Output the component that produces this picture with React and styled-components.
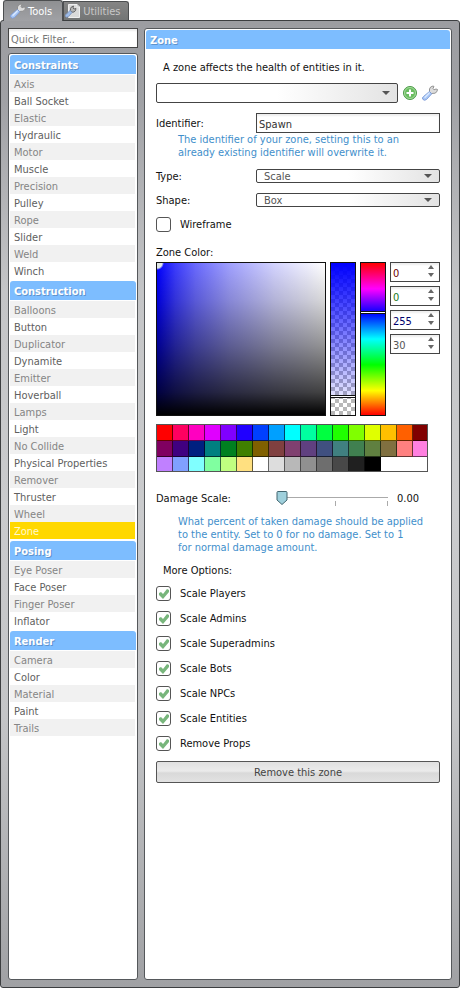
import React, { useState } from "react";
import styled, { createGlobalStyle, css } from "styled-components";

const svgUrl = (body, w, h) =>
  `url("data:image/svg+xml,${encodeURIComponent(
    `<svg xmlns='http://www.w3.org/2000/svg' width='${w}' height='${h}' viewBox='0 0 ${w} ${h}'>${body}</svg>`
  )}")`;

const arrowImage = svgUrl("<path d='M0 1H8L4 5Z' fill='#555'/>", 8, 6);
const tickImage = svgUrl(
  "<path d='M1 5L3 4L5 6L9 1L11 2V4L5 11L1 7Z' fill='#78b67c'/>",
  12,
  12
);
const thumbImage = svgUrl(
  "<path d='M1 1.5Q1 .5 2 .5H10Q11 .5 11 1.5V9L6 13.5L1 9Z' fill='#9fd0dc' stroke='#42656f'/>",
  12,
  14
);

const Global = createGlobalStyle`
  *, *::before, *::after { box-sizing: border-box; }
  body {
    margin: 0;
    background: #fff;
    color: #111;
    font: 11px/13px "DejaVu Sans Condensed", "DejaVu Sans", sans-serif;
  }
  button, input, select { font: inherit; color: inherit; margin: 0; }
`;

const Shell = styled.div`
  display: flex;
  flex-direction: column;
  min-height: 100vh;
`;

const TabBar = styled.div`
  display: flex;
  align-items: flex-end;
  height: 20px;
  padding-left: 3px;
`;

const Tab = styled.button`
  display: flex;
  align-items: center;
  gap: 2px;
  height: 19px;
  padding: 0 8px 0 1px;
  border: 1px solid #4c4e50;
  border-bottom: 0;
  border-radius: 0 3px 0 0;
  background: linear-gradient(#858585, #737575);
  color: #c8c8c8;
  white-space: nowrap;
  ${(p) =>
    p.$active &&
    css`
      z-index: 1;
      height: 21px;
      margin-bottom: -1px;
      padding: 0 10px 0 6px;
      border-radius: 3px 3px 0 0;
      background: linear-gradient(#8f9092, #a0a1a5);
      color: #fff;
    `}
`;

const Frame = styled.div`
  flex: 1;
  display: flex;
  gap: 6px;
  padding: 7px;
  border: 1px solid #3c3e40;
  border-radius: 3px;
  background: linear-gradient(#9c9da1, #a0a1a5 8%, #c4c5c7 28%, #cacbcd 50%, #c4c5c7 72%, #a0a1a4);
`;

const Sidebar = styled.aside`
  display: flex;
  flex-direction: column;
  gap: 5px;
  flex: 0 0 130px;
`;

const TextBox = styled.input`
  width: 100%;
  min-width: 0;
  height: 20px;
  padding: 2px 2px 0;
  border: 1px solid #444;
  border-radius: 0;
  background: #fff;
  box-shadow: inset 0 2px 2px #eee;
  color: #333;
  &::placeholder { color: #777; opacity: 1; }
`;

const panel = css`
  border: 1px solid #55585b;
  border-radius: 3px;
  background: #fff;
  padding: 1px;
`;

const ToolList = styled.nav`
  ${panel}
  flex: 1;
`;

const ToolGroup = styled.section`
  display: flex;
  flex-direction: column;
  padding-bottom: 2px;
`;

const Heading = styled.h2`
  height: 19px;
  margin: 0 0 1px;
  padding: 2px 4px 0;
  border-radius: 3px 3px 0 0;
  background: #7dbdff;
  color: #fff;
  font-size: 11px;
  font-weight: bold;
  line-height: 17px;
  text-shadow: 1px 1px 0 #5f93cc;
`;

const Tool = styled.button`
  height: 17px;
  margin: 0 1px 0 0;
  padding: 2px 4px 0;
  border: 0;
  background: ${(p) => (p.$active ? "#ffd800" : "#fff")};
  color: ${(p) => (p.$active ? "#fff8cc" : "#606060")};
  line-height: 15px;
  text-align: left;
  ${(p) =>
    !p.$active &&
    css`
      &:nth-of-type(odd) { background: #f1f1f1; color: #858585; }
    `}
`;

const Main = styled.main`
  ${panel}
  flex: 1;
  min-width: 0;
`;

const Body = styled.form`
  display: flex;
  flex-direction: column;
  padding: 11px 10px 0;
`;

const Note = styled.p`
  margin: 0;
  padding-left: 7px;
`;

const PresetRow = styled.div`
  display: flex;
  align-items: center;
  gap: 4px;
  margin: 9px 0 10px;
  padding-right: 2px;
`;

const IconButton = styled.button`
  display: flex;
  padding: 0;
  border: 0;
  background: none;
`;

const Select = styled.select`
  appearance: none;
  flex: 1;
  width: 100%;
  min-width: 0;
  height: ${(p) => (p.$tall ? 20 : 14)}px;
  padding: 1px 18px 0 7px;
  border: 1px solid #444;
  border-radius: 2px;
  background: ${arrowImage} no-repeat right 7px center,
    linear-gradient(90deg, #fff 50%, #e3e3e3);
  color: #555;
  line-height: 11px;
`;

const Field = styled.div`
  display: grid;
  grid-template-columns: 100px 1fr;
  align-items: center;
  margin-bottom: ${(p) => p.$gap || 0}px;
`;

const Help = styled.p`
  margin: 0 0 10px;
  padding-left: 22px;
  color: #3f8fcb;
`;

const CheckRow = styled.label`
  display: flex;
  align-items: center;
  gap: 9px;
  height: 15px;
`;

const CheckBox = styled.input`
  appearance: none;
  width: 15px;
  height: 15px;
  border: 1px solid #555;
  border-radius: 3px;
  background: #fff;
  &:checked { background: ${tickImage} center no-repeat; }
`;

const Options = styled.div`
  display: flex;
  flex-direction: column;
  gap: 10px;
  margin: 9px 0 10px;
`;

const PickerTitle = styled.div`
  margin-top: 14px;
`;

const Picker = styled.div`
  display: flex;
  gap: 4px;
  height: 154px;
  margin: 3px 0 8px;
`;

const Shade = styled.div`
  flex: 1;
  border: 1px solid #111;
  background: radial-gradient(circle at 0 0, #dfe6e6 5px, transparent 7px),
    linear-gradient(
      to top,
      #000,
      rgba(0, 0, 0, 0.74) 15%,
      rgba(0, 0, 0, 0.43) 45%,
      rgba(0, 0, 0, 0.16) 75%,
      rgba(0, 0, 0, 0)
    ),
    linear-gradient(90deg, #00f, #3c3cff 11%, #6a6aff 23%, #a0a0ff 43%, #d4d4ff 70%, #fff);
`;

const Bar = styled.div`
  display: flex;
  flex-direction: column;
  width: 26px;
  border: 1px solid #111;
  ${(p) =>
    p.$hue
      ? css`
          background: linear-gradient(#f00, #f0f 17%, #00f 33%, #0ff 50%, #0f0 67%, #ff0 84%, #f00);
        `
      : css`
          background: linear-gradient(#00f, rgba(0, 0, 255, 0.1) 88%, transparent 88%),
            repeating-conic-gradient(#b8b8b8 0 25%, #fff 0 50%) 0 0 / 8px 8px;
        `}
`;

const BarMark = styled.div`
  height: 3px;
  border: solid #111;
  border-width: 1px 0;
  background: #fff;
`;

const BarSpace = styled.div`
  flex: ${(p) => p.$part};
`;

const Channels = styled.div`
  display: flex;
  flex-direction: column;
  gap: 4px;
  width: 50px;
`;

const NumberBox = styled.div`
  display: flex;
  height: 20px;
  border: 1px solid #444;
  box-shadow: inset 0 2px 2px #eee;
`;

const NumberInput = styled.input`
  appearance: textfield;
  flex: 1;
  min-width: 0;
  padding: 3px 0 0 2px;
  border: 0;
  background: none;
  color: ${(p) => p.$color};
  font-size: 11px;
  &::-webkit-inner-spin-button { display: none; }
`;

const Steps = styled.div`
  display: flex;
  flex-direction: column;
  justify-content: space-around;
  width: 15px;
  padding-bottom: 2px;
`;

const Step = styled.button`
  display: flex;
  padding: 1px 4px;
  border: 0;
  background: none;
`;

const Palette = styled.div`
  display: grid;
  grid-template-columns: repeat(17, 16px);
  grid-auto-rows: 16px;
  align-self: flex-start;
  border: 1px solid #555;
  width: 272px;
  height: 48px;
  overflow: hidden;
`;

const Swatch = styled.button`
  padding: 0;
  border: 0;
  box-shadow: inset -1px -1px 0 rgba(0, 0, 0, 0.6);
  background: ${(p) => p.$color};
`;

const SliderField = styled.div`
  display: grid;
  grid-template-columns: 120px 1fr 46px;
  align-items: center;
  margin: 17px 0 8px;
`;

const Slider = styled.input`
  appearance: none;
  width: 100%;
  height: 18px;
  margin: 0;
  background: linear-gradient(#aaa, #aaa) 6px 8px / calc(100% - 12px) 1px no-repeat,
    linear-gradient(#aaa, #aaa) 50% 12px / 1px 5px no-repeat,
    linear-gradient(#aaa, #aaa) calc(100% - 6px) 12px / 1px 5px no-repeat;
  &::-webkit-slider-thumb {
    appearance: none;
    width: 12px;
    height: 14px;
    background: ${thumbImage} no-repeat;
  }
`;

const Amount = styled.output`
  padding-left: 3px;
`;

const RemoveButton = styled.button`
  height: 22px;
  padding: 0;
  border: 1px solid #555;
  border-radius: 2px;
  background: linear-gradient(#e0e0e0, #ebebeb 45%, #d9d9d9 55%, #e2e2e2);
  color: #444;
`;

const Wrench = () => (
  <svg width="16" height="16" viewBox="0 0 16 16" fill="none" aria-hidden="true">
    <path
      d="M7.500 6.500L7.500 4Q8 1.500 11 1L12 1.500L11 3.500L12 4.800L14 4L15.500 4.500Q15.500 7 13 8.200L9.500 8.500Z"
      fill="#dcdcdc"
      stroke="#8a8a8a"
      strokeWidth=".9"
      strokeLinejoin="round"
    />
    <path
      d="M7.500 6.500L9.800 8.800L4.500 14.500Q2.500 16 1 14.500T1.500 11.500Z"
      fill="#a9c8f7"
      stroke="#7d9bd6"
      strokeWidth=".9"
      strokeLinejoin="round"
    />
    <path d="M7.200 8L3 12.200" stroke="#dceaff" strokeWidth="1.300" strokeLinecap="round" />
  </svg>
);

const PageWrench = () => (
  <svg width="16" height="16" viewBox="0 0 16 16" fill="none" aria-hidden="true">
    <path d="M3.500 1.500H12L14.500 4V14.500H3.500Z" fill="#dadada" stroke="#efefef" />
    <path d="M12 1.500V4H14.500" fill="#b8b8b8" stroke="#eee" />
    <path
      d="M5.500 7.500L5.500 5.500Q6 3.500 8.500 3L8 5L9 6L11 5.500Q11 8 9 9L7 9.200Z"
      fill="#b4b4b4"
      stroke="#5c5c5c"
      strokeWidth=".9"
      strokeLinejoin="round"
    />
    <path d="M5 7.500L7 9.500L3.500 13.500Q1.500 15 .5 13.500T1 11.500Z" fill="#9cbbe8" stroke="#7d93bd" strokeWidth=".9" />
  </svg>
);

const AddIcon = () => (
  <svg width="16" height="16" viewBox="0 0 16 16" fill="none" aria-hidden="true">
    <circle cx="8" cy="8" r="6.500" fill="#69bd60" stroke="#4c9a49" />
    <circle cx="8" cy="8" r="5.500" stroke="#a7dc9d" />
    <path d="M8 4.500V11.500M4.500 8H11.500" stroke="#fff" strokeWidth="2" />
  </svg>
);

const StepArrow = ({ down }) => (
  <svg width="6" height="4" viewBox="0 0 6 4" aria-hidden="true">
    <path d={down ? "M0 0H6L3 4Z" : "M0 4H6L3 0Z"} fill="#666" />
  </svg>
);

const groups = [
  ["Constraints", ["Axis", "Ball Socket", "Elastic", "Hydraulic", "Motor", "Muscle", "Precision", "Pulley", "Rope", "Slider", "Weld", "Winch"]],
  ["Construction", ["Balloons", "Button", "Duplicator", "Dynamite", "Emitter", "Hoverball", "Lamps", "Light", "No Collide", "Physical Properties", "Remover", "Thruster", "Wheel", "Zone"]],
  ["Posing", ["Eye Poser", "Face Poser", "Finger Poser", "Inflator"]],
  ["Render", ["Camera", "Color", "Material", "Paint", "Trails"]],
];

const swatches = (
  "ff0000 ff0060 ff00c0 e000ff 8000ff 2000ff 0040ff 00a0ff 00ffff 00ffa0 00ff40 20ff00 80ff00 e0ff00 ffc000 ff6000 800000 " +
  "800060 400080 002080 008080 008020 408000 806000 804040 804070 604080 405080 408080 408050 608040 807040 ff8080 ff80e0 " +
  "c080ff 80a0ff 80ffff 80ffa0 c0ff80 ffe080 ffffff dddddd b8b8b8 909090 6e6e6e 484848 202020 000000"
).split(" ");

const channels = [
  ["Red", 0, "#700000"],
  ["Green", 0, "#1c7a1c"],
  ["Blue", 255, "#00006c"],
  ["Alpha", 30, "#555"],
];

const options = ["Scale Players", "Scale Admins", "Scale Superadmins", "Scale Bots", "Scale NPCs", "Scale Entities", "Remove Props"];

function Channel({ label, initial, color }) {
  const [value, setValue] = useState(initial);
  const change = (next) => setValue(Math.max(0, Math.min(255, Number(next))));
  return (
    <NumberBox>
      <NumberInput type="number" aria-label={label} $color={color} value={value} onChange={(e) => change(e.target.value)} />
      <Steps>
        <Step type="button" aria-label={`Increase ${label}`} onClick={() => change(value + 1)}>
          <StepArrow />
        </Step>
        <Step type="button" aria-label={`Decrease ${label}`} onClick={() => change(value - 1)}>
          <StepArrow down />
        </Step>
      </Steps>
    </NumberBox>
  );
}

export default function App() {
  const [tool, setTool] = useState("Zone");
  const [scale, setScale] = useState(0);

  return (
    <Shell>
      <Global />
      <TabBar role="tablist">
        <Tab type="button" role="tab" aria-selected="true" $active>
          <Wrench />
          Tools
        </Tab>
        <Tab type="button" role="tab" aria-selected="false">
          <PageWrench />
          Utilities
        </Tab>
      </TabBar>
      <Frame>
        <Sidebar>
          <TextBox type="text" placeholder="Quick Filter..." aria-label="Quick Filter" />
          <ToolList>
            {groups.map(([title, tools]) => (
              <ToolGroup key={title}>
                <Heading>{title}</Heading>
                {tools.map((name) => (
                  <Tool key={name} type="button" $active={name === tool} onClick={() => setTool(name)}>
                    {name}
                  </Tool>
                ))}
              </ToolGroup>
            ))}
          </ToolList>
        </Sidebar>
        <Main>
          <Heading as="h1">Zone</Heading>
          <Body onSubmit={(e) => e.preventDefault()}>
            <Note>A zone affects the health of entities in it.</Note>
            <PresetRow>
              <Select $tall aria-label="Preset">
                <option></option>
              </Select>
              <IconButton type="button" aria-label="Add preset">
                <AddIcon />
              </IconButton>
              <IconButton type="button" aria-label="Edit presets">
                <Wrench />
              </IconButton>
            </PresetRow>
            <Field>
              <label htmlFor="identifier">Identifier:</label>
              <TextBox id="identifier" type="text" defaultValue="Spawn" />
            </Field>
            <Help>
              The identifier of your zone, setting this to an
              <br />
              already existing identifier will overwrite it.
            </Help>
            <Field $gap={10}>
              <label htmlFor="type">Type:</label>
              <Select id="type">
                <option>Scale</option>
              </Select>
            </Field>
            <Field $gap={10}>
              <label htmlFor="shape">Shape:</label>
              <Select id="shape">
                <option>Box</option>
              </Select>
            </Field>
            <CheckRow>
              <CheckBox type="checkbox" />
              Wireframe
            </CheckRow>
            <PickerTitle>Zone Color:</PickerTitle>
            <Picker>
              <Shade />
              <Bar>
                <BarSpace $part={132} />
                <BarMark />
                <BarSpace $part={17} />
              </Bar>
              <Bar $hue>
                <BarSpace $part={48} />
                <BarMark />
                <BarSpace $part={101} />
              </Bar>
              <Channels>
                {channels.map(([label, initial, color]) => (
                  <Channel key={label} label={label} initial={initial} color={color} />
                ))}
              </Channels>
            </Picker>
            <Palette>
              {swatches.map((c) => (
                <Swatch key={c} type="button" aria-label={`#${c}`} $color={`#${c}`} />
              ))}
            </Palette>
            <SliderField>
              <label htmlFor="damage">Damage Scale:</label>
              <Slider id="damage" type="range" min="0" max="2" step="0.01" value={scale} onChange={(e) => setScale(Number(e.target.value))} />
              <Amount htmlFor="damage">{scale.toFixed(2)}</Amount>
            </SliderField>
            <Help>
              What percent of taken damage should be applied
              <br />
              to the entity. Set to 0 for no damage. Set to 1
              <br />
              for normal damage amount.
            </Help>
            <Note>More Options:</Note>
            <Options>
              {options.map((name) => (
                <CheckRow key={name}>
                  <CheckBox type="checkbox" defaultChecked />
                  {name}
                </CheckRow>
              ))}
            </Options>
            <RemoveButton type="button">Remove this zone</RemoveButton>
          </Body>
        </Main>
      </Frame>
    </Shell>
  );
}
